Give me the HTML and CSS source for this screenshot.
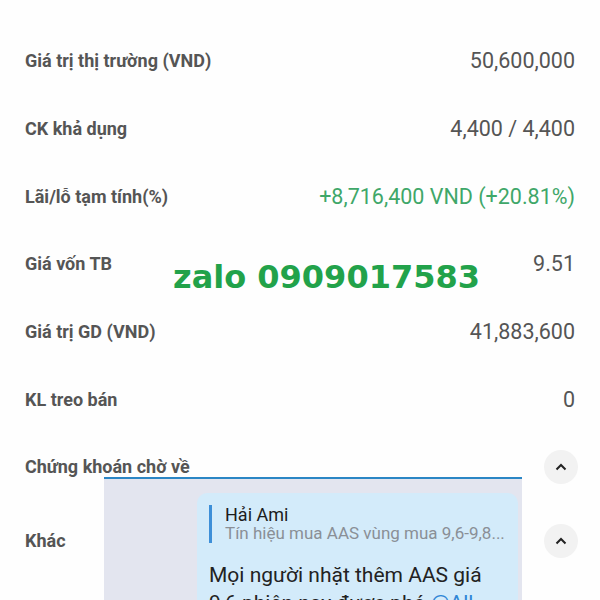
FILE: index.html
```html
<!DOCTYPE html>
<html>
<head>
    <meta charset="utf-8">
    <link rel="stylesheet" href="styles.css">
</head>
<body>
    <div class="detail">
        <div class="row">
            <span class="label">Giá trị thị trường (VND)</span>
            <span class="value">50,600,000</span>
        </div>
        <div class="row">
            <span class="label">CK khả dụng</span>
            <span class="value">4,400 / 4,400</span>
        </div>
        <div class="row">
            <span class="label">Lãi/lỗ tạm tính(%)</span>
            <span class="value up">+8,716,400 VND (+20.81%)</span>
        </div>
        <div class="row">
            <span class="label">Giá vốn TB</span>
            <span class="value">9.51</span>
        </div>
        <div class="row">
            <span class="label">Giá trị GD (VND)</span>
            <span class="value">41,883,600</span>
        </div>
        <div class="row">
            <span class="label">KL treo bán</span>
            <span class="value">0</span>
        </div>
        <div class="row">
            <span class="label">Chứng khoán chờ về</span>
            <span class="toggle">
                <svg width="14" height="14" viewBox="0 0 14 14"><path d="M2.5 9.5 L7 5 L11.5 9.5" fill="none" stroke="#222" stroke-width="2"/></svg>
            </span>
        </div>
        <div class="row row-last">
            <span class="label">Khác</span>
            <span class="toggle">
                <svg width="14" height="14" viewBox="0 0 14 14"><path d="M2.5 9.5 L7 5 L11.5 9.5" fill="none" stroke="#222" stroke-width="2"/></svg>
            </span>
        </div>
    </div>

    <!-- watermark stamped over the screenshot -->
    <div class="watermark">zalo 0909017583</div>

    <!-- pasted chat snippet -->
    <div class="chat">
        <div class="bubble">
            <div class="quote">
                <div class="quote-name">Hải Ami</div>
                <div class="quote-text">Tín hiệu mua AAS vùng mua 9,6-9,8...</div>
            </div>
            <div class="message">Mọi người nhặt thêm AAS giá 9,6 phiên nay được phó <span class="mention">@All</span></div>
        </div>
    </div>
</body>
</html>
```

FILE: styles.css
```css
body {
    margin: 0;
    height: 600px;
    overflow: hidden;
    background-color: #fefefe;
    font-family: Roboto, "Liberation Sans", sans-serif;
    position: relative;
}
.detail {
    padding: 27px 25px 0 25px;
}
.row {
    display: flex;
    justify-content: space-between;
    align-items: center;
    height: 67.7px;
}
.row-last {
    margin-top: 6px;
}
.label {
    font-size: 18px;
    font-weight: 700;
    color: #555;
}
.value {
    font-size: 21.5px;
    color: #555;
}
.value.up {
    color: #3fa769;
}
/* round chevron button */
.toggle {
    display: flex;
    justify-content: center;
    align-items: center;
    width: 34px;
    height: 34px;
    border-radius: 50%;
    background-color: #f2f2f2;
    margin-right: -3px;
}
.watermark {
    position: absolute;
    left: 173px;
    top: 258px;
    font-family: "DejaVu Sans", sans-serif;
    font-weight: 700;
    font-size: 32px;
    color: #22a24a;
}
.chat {
    position: absolute;
    left: 104px;
    top: 477px;
    width: 418px;
    bottom: 0;
    overflow: hidden;
    background-color: #e3e5ef;
    border-top: 2px solid #2b86c5;
    padding: 14px 4px 0 93px;
    box-sizing: border-box;
}
.bubble {
    background-color: #d3ebfa;
    border-radius: 10px;
    padding: 12px 8px 0 12px;
    height: 200px;
}
.quote {
    border-left: 3px solid #3d8fd8;
    padding-left: 13px;
}
.quote-name {
    font-size: 18px;
    line-height: 19px;
    color: #1c1c1c;
}
.quote-text {
    font-size: 17px;
    line-height: 19px;
    color: #8a8f96;
    white-space: nowrap;
}
.message {
    margin-top: 18px;
    font-size: 21px;
    line-height: 28px;
    color: #222;
}
.mention {
    color: #2f86d6;
}
```
